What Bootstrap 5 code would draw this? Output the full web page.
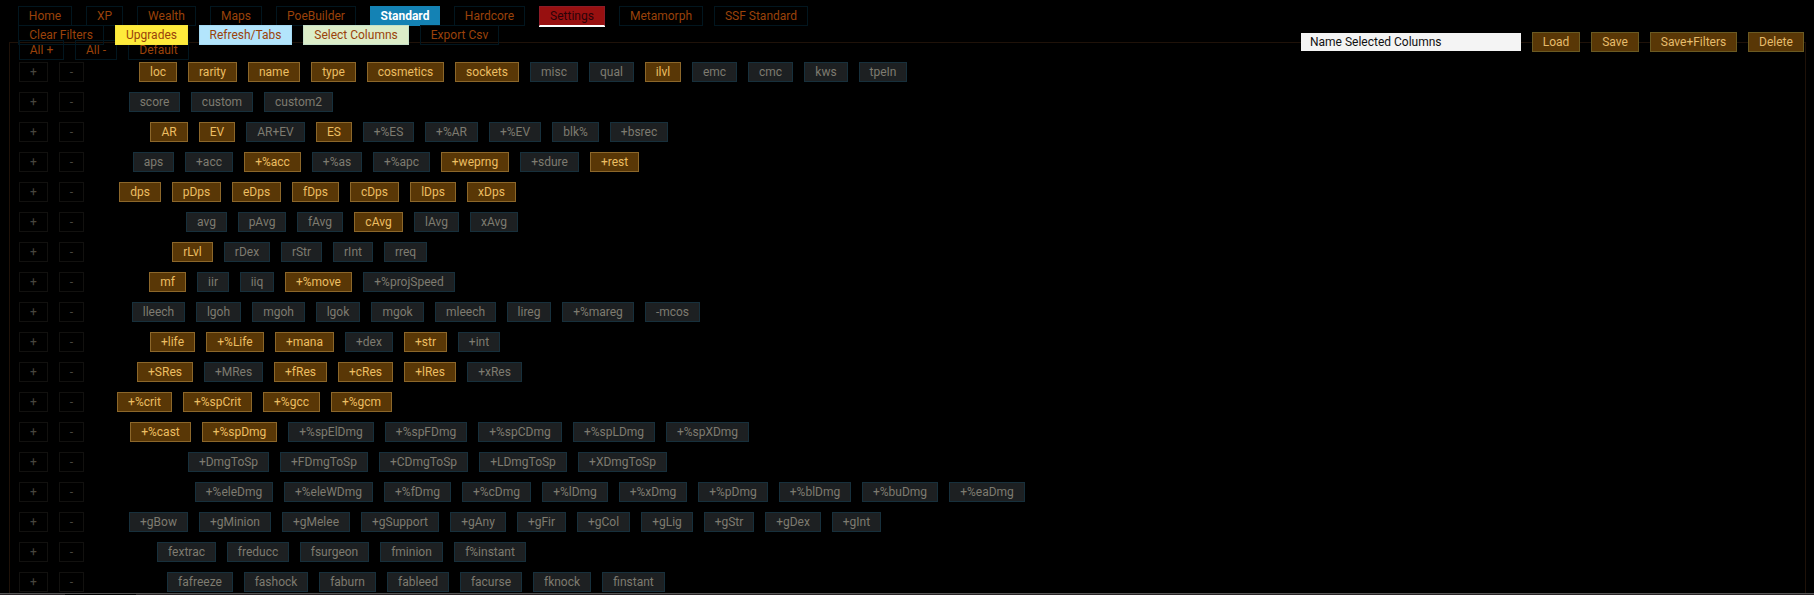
<!DOCTYPE html>
<html lang="en" data-bs-theme="dark">
<head>
<meta charset="utf-8">
<title>Stash Columns</title>
<link rel="stylesheet" href="https://cdn.jsdelivr.net/npm/bootstrap@5.3.0/dist/css/bootstrap.min.css">
<style>
html, body { height: 100%; }
body { background: #000; font: 12px/18px Roboto, sans-serif; overflow: hidden; }
.btn {
  --bs-btn-padding-x: 0; --bs-btn-padding-y: 0;
  --bs-btn-font-size: 12px; --bs-btn-line-height: 18px; --bs-btn-border-radius: 0;
  flex: none; width: var(--w); height: 20px; white-space: nowrap; cursor: pointer; transition: none;
}
.tool { --bs-btn-color: #9a420a; --bs-btn-border-color: #02161f; }
.on { --bs-btn-color: #ecbe62; --bs-btn-bg: #593706; --bs-btn-border-color: #8c672a; }
.off { --bs-btn-color: #7d7b70; --bs-btn-bg: #1d2022; --bs-btn-border-color: #17303c; }
.step { --bs-btn-color: #48463f; --bs-btn-border-color: #12110f; }
.save { --bs-btn-color: #e6bc6c; --bs-btn-bg: #593706; --bs-btn-border-color: #6b5a22; }
.league { --bs-btn-color: #fff; --bs-btn-bg: #1482b4; --bs-btn-border-color: #1482b4; --bs-btn-font-weight: 700; }
.config { --bs-btn-color: #2c0308; --bs-btn-bg: #981010; --bs-btn-border-color: #8d1a26; box-shadow: 0 1px #fff; border-bottom-color: #fff; }
.yellow { --bs-btn-bg: #ffeb3b; --bs-btn-border-color: #f5e63c; }
.sky { --bs-btn-bg: #b3e5fc; --bs-btn-border-color: #a5daf3; }
.lime { --bs-btn-bg: #dcedc8; --bs-btn-border-color: #c5e0c8; }
.leagues { gap: 14px; padding: 6px 0 0 18px; }
.leagues .btn:last-child { margin-left: -3px; }
.actions { gap: 11px; margin-top: -1px; padding-left: 18px; position: relative; z-index: 1; }
.panel { margin: -3px 8px 0 9px; height: 551px; border: 1px solid #1f1209; border-bottom: 0; }
.presets { gap: 11px; height: 20px; margin-top: -3px; padding-left: 9px; }
.saver { gap: 11px; margin: -8px 1px 0 auto; }
.saver .form-control { width: 220px; height: 18px; min-height: 0; padding: 0 9px; border: 0; border-radius: 0; background: #f4f4f4; color: #111; font-size: 12px; line-height: 18px; }
.group { height: 20px; margin-bottom: 10px; padding-left: 9px; }
.group:last-child { margin-bottom: 0; }
.chips { gap: 11px; }
.groups { padding-top: 2px; }
.hbar { height: 2px; background: linear-gradient(90deg, #2a2527 65px, #000 65px 136px, #2a2527 136px); border-top: 1px solid #555; }
</style>
</head>
<body>
<nav class="d-flex leagues">
  <a class="btn tool" style="--w:54px">Home</a><a class="btn tool" style="--w:37px">XP</a><a class="btn tool" style="--w:59px">Wealth</a><a class="btn tool" style="--w:52px">Maps</a><a class="btn tool" style="--w:80px">PoeBuilder</a><a class="btn league" style="--w:70px">Standard</a><a class="btn tool" style="--w:71px">Hardcore</a><a class="btn config" style="--w:66px">Settings</a><a class="btn tool" style="--w:84px">Metamorph</a><a class="btn tool" style="--w:94px">SSF Standard</a>
</nav>
<div class="d-flex actions">
  <a class="btn tool" style="--w:86px">Clear Filters</a><a class="btn tool yellow" style="--w:73px">Upgrades</a><a class="btn tool sky" style="--w:93px">Refresh/Tabs</a><a class="btn tool lime" style="--w:106px">Select Columns</a><a class="btn tool" style="--w:79px">Export Csv</a>
</div>
<main class="panel">
  <div class="d-flex align-items-start presets">
    <a class="btn tool" style="--w:45px">All +</a><a class="btn tool" style="--w:42px">All -</a><a class="btn tool" style="--w:61px">Default</a>
    <div class="d-flex align-items-center saver">
      <input class="form-control" value="Name Selected Columns" aria-label="Name">
      <a class="btn save" style="--w:48px">Load</a><a class="btn save" style="--w:48px">Save</a><a class="btn save" style="--w:87px">Save+Filters</a><a class="btn save" style="--w:56px">Delete</a>
    </div>
  </div>
  <div class="groups" id="groups"></div>
</main>
<div class="fixed-bottom hbar"></div>
<script src="https://cdn.jsdelivr.net/npm/bootstrap@5.3.0/dist/js/bootstrap.bundle.min.js"></script>
<script>
// Each group: indent of its first column, the columns ("*" marks a selected one), the column widths.
const groups = [
  [55, '*loc *rarity *name *type *cosmetics *sockets misc qual *ilvl emc cmc kws tpeIn', [38,49,52,45,77,64,48,45,36,45,45,44,48]],
  [45, 'score custom custom2', [51,62,69]],
  [66, '*AR *EV AR+EV *ES +%ES +%AR +%EV blk% +bsrec', [38,36,59,36,51,53,52,47,58]],
  [49, 'aps +acc *+%acc +%as +%apc *+weprng +sdure *+rest', [41,48,57,50,57,68,59,49]],
  [35, '*dps *pDps *eDps *fDps *cDps *lDps *xDps', [42,49,49,47,49,46,49]],
  [102, 'avg pAvg fAvg *cAvg lAvg xAvg', [41,48,46,49,45,48]],
  [88, '*rLvl rDex rStr rInt rreq', [41,46,41,40,43]],
  [65, '*mf iir iiq *+%move +%projSpeed', [37,32,34,67,92]],
  [48, 'lleech lgoh mgoh lgok mgok mleech lireg +%mareg -mcos', [53,45,53,44,53,61,44,72,55]],
  [66, '*+life *+%Life *+mana +dex *+str +int', [45,58,59,48,43,42]],
  [53, '*+SRes +MRes *+fRes *+cRes *+lRes +xRes', [56,59,53,55,52,55]],
  [33, '*+%crit *+%spCrit *+%gcc *+%gcm', [55,69,57,61]],
  [46, '*+%cast *+%spDmg +%spElDmg +%spFDmg +%spCDmg +%spLDmg +%spXDmg', [61,75,86,82,84,82,83]],
  [104, '+DmgToSp +FDmgToSp +CDmgToSp +LDmgToSp +XDmgToSp', [81,88,89,88,89]],
  [111, '+%eleDmg +%eleWDmg +%fDmg +%cDmg +%lDmg +%xDmg +%pDmg +%blDmg +%buDmg +%eaDmg', [78,89,67,69,66,68,70,72,76,76]],
  [45, '+gBow +gMinion +gMelee +gSupport +gAny +gFir +gCol +gLig +gStr +gDex +gInt', [59,72,68,78,56,49,53,52,50,56,49]],
  [73, 'fextrac freducc fsurgeon fminion f%instant', [59,62,69,63,72]],
  [83, 'fafreeze fashock faburn fableed facurse fknock finstant', [66,64,57,62,62,58,63]]
];
const chip = (kind, text, w) => `<a class="btn ${kind}" style="--w:${w}px">${text}</a>`;
document.getElementById('groups').innerHTML = groups.map(([indent, cols, widths]) =>
  `<div class="d-flex group"><div class="d-flex chips">${chip('step', '+', 29)}${chip('step', '-', 25)}</div>` +
  `<div class="d-flex chips" style="margin-left:${indent}px">` +
  cols.split(' ').map((c, i) => c[0] === '*' ? chip('on', c.slice(1), widths[i]) : chip('off', c, widths[i])).join('') +
  `</div></div>`).join('');
</script>
</body>
</html>
